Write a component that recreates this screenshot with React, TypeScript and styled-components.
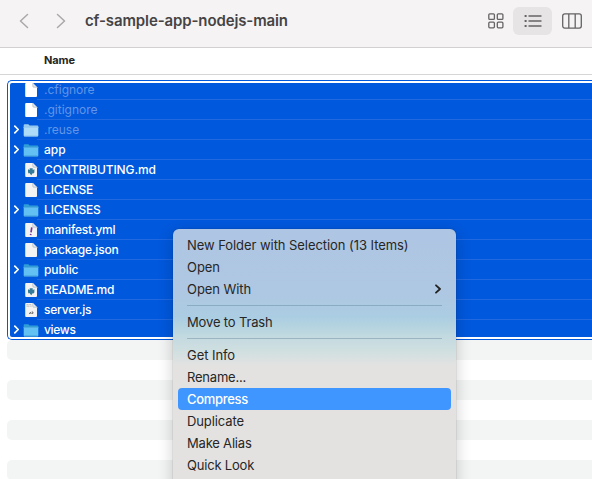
import React from 'react';
import styled, { createGlobalStyle, css } from 'styled-components';

const GlobalStyle = createGlobalStyle`
  * { box-sizing: border-box; }
  body { margin: 0; background: #fff; overflow: hidden; }
`;

const Window = styled.div`
  position: relative;
  width: 592px;
  height: 479px;
  overflow: hidden;
  display: flex;
  flex-direction: column;
  background: #fff;
  color: #262626;
  font-family: Inter, 'Liberation Sans', sans-serif;
  cursor: default;
`;

const Toolbar = styled.header`
  flex: none;
  display: flex;
  align-items: center;
  justify-content: space-between;
  height: 48px;
  padding: 0 0 6px 19px;
  background: #f5f3f4;
  border-bottom: 1px solid #d2d0d1;
`;

const Navigation = styled.div`
  display: flex;
  align-items: center;
`;

const NavArrow = styled.svg`
  width: 10px;
  height: 16px;
  margin-right: 27px;
  fill: none;
  stroke: #aaa8a9;
  stroke-width: 1.5;
  stroke-linecap: round;
  stroke-linejoin: round;
`;

const Title = styled.h1`
  margin: 0 0 0 -8px;
  font-size: 15px;
  line-height: 20px;
  font-weight: 600;
  letter-spacing: -0.12px;
  color: #454344;
`;

const Views = styled.div`
  display: flex;
  align-items: center;
`;

const ViewButton = styled.div<{ $width: number; $active?: boolean }>`
  display: flex;
  align-items: center;
  justify-content: center;
  width: ${(p) => p.$width}px;
  height: 28px;
  border-radius: 6px;
  background: ${(p) => (p.$active ? '#e6e4e5' : 'transparent')};
`;

const ViewIcon = styled.svg`
  display: block;
  fill: none;
  stroke: #656364;
  stroke-width: 1.3;
`;

const ColumnHeader = styled.div`
  flex: none;
  height: 27px;
  padding-left: 44px;
  border-bottom: 1px solid #d6d6d6;
  font-size: 11px;
  line-height: 25px;
  font-weight: 700;
  letter-spacing: -0.1px;
`;

const FileList = styled.main`
  padding: 5px 0 0 7px;
`;

const Selection = styled.div`
  height: 260px;
  padding: 2px 0 2px 2px;
  border: 1px solid #0058dc;
  border-right: 0;
  border-radius: 5px 0 0 5px;
`;

const SelectedRows = styled.div`
  height: 254px;
  overflow: hidden;
  border-radius: 2px 0 0 2px;
  background: #0058dc;
`;

const Rows = styled.div`
  margin-top: -3px;
`;

const Row = styled.div`
  display: flex;
  align-items: center;
  height: 20px;
  padding-left: 3px;
`;

const Disclosure = styled.svg`
  flex: none;
  width: 7px;
  height: 10px;
  margin-right: 3px;
  fill: none;
  stroke: #fff;
  stroke-width: 1.7;
  stroke-linecap: round;
  stroke-linejoin: round;
`;

const FileIcon = styled.svg`
  flex: none;
  width: 16px;
  height: 18px;
`;

const FileName = styled.div<{ $dim?: boolean; $spacing?: number }>`
  flex: 1;
  height: 20px;
  margin-left: -2px;
  padding-left: 7px;
  border-bottom: 1px solid #2269df;
  font-size: 12px;
  line-height: 19px;
  font-weight: ${(p) => (p.$dim ? 400 : 500)};
  letter-spacing: ${(p) => p.$spacing ?? 0}px;
  color: ${(p) => (p.$dim ? '#6295e8' : '#fff')};
`;

const Stripe = styled.div`
  height: 20px;
  margin-bottom: 20px;
  border-radius: 5px 0 0 5px;
  background: #f3f4f4;
`;

const Menu = styled.div`
  position: absolute;
  left: 173px;
  top: 229px;
  width: 283px;
  height: 270px;
  padding: 5px;
  border-radius: 6px;
  background: linear-gradient(
    #aec6e3 0, #aec7e2 64px, #abcde2 88px, #b3d3e0 96px,
    #c4dae0 109px, #d0dfe0 122px, #e3e2e1 137px
  );
  box-shadow: 0 0 1px rgba(0, 0, 0, 0.55), 0 5px 16px rgba(0, 0, 0, 0.2);
`;

const MenuItem = styled.div<{ $spacing?: number; $highlighted?: boolean }>`
  display: flex;
  align-items: center;
  justify-content: space-between;
  height: 22px;
  padding: 0 10px 0 9px;
  border-radius: 4px;
  font-size: 13px;
  line-height: 22px;
  letter-spacing: ${(p) => p.$spacing ?? -0.06}px;
  white-space: nowrap;
  ${(p) =>
    p.$highlighted &&
    css`
      background: #4096ff;
      color: #fff;
      font-weight: 500;
    `}
`;

const Separator = styled.div`
  height: 1px;
  margin: 5px 9px;
  background: rgba(60, 100, 125, 0.3);
`;

const SubmenuArrow = styled.svg`
  width: 6px;
  height: 10px;
  fill: none;
  stroke: #222;
  stroke-width: 1.8;
  stroke-linecap: round;
  stroke-linejoin: round;
`;

type IconKind = 'page' | 'folder' | 'markdown' | 'yaml' | 'script';

interface FileEntry {
  name: string;
  icon: IconKind;
  dim?: boolean;
  spacing?: number;
}

const files: FileEntry[] = [
  { name: '.cfignore', icon: 'page', dim: true },
  { name: '.gitignore', icon: 'page', dim: true },
  { name: '.reuse', icon: 'folder', dim: true },
  { name: 'app', icon: 'folder' },
  { name: 'CONTRIBUTING.md', icon: 'markdown', spacing: -0.12 },
  { name: 'LICENSE', icon: 'page', spacing: -0.15 },
  { name: 'LICENSES', icon: 'folder', spacing: -0.15 },
  { name: 'manifest.yml', icon: 'yaml', spacing: -0.2 },
  { name: 'package.json', icon: 'page', spacing: -0.2 },
  { name: 'public', icon: 'folder', spacing: -0.1 },
  { name: 'README.md', icon: 'markdown', spacing: -0.2 },
  { name: 'server.js', icon: 'script', spacing: -0.2 },
  { name: 'views', icon: 'folder', spacing: -0.3 },
];

function EntryIcon({ kind, dim }: { kind: IconKind; dim?: boolean }) {
  if (kind === 'folder') {
    return (
      <FileIcon viewBox="0 0 16 18">
        <path d="M.7 4.2q0-1 1-1h3.6l1.3 1.2h7.7q1 0 1 1V7H.7z" fill={dim ? '#9bcdf0' : '#309fd8'} />
        <path d="M.7 6h14.6v8.4q0 1-1 1H1.7q-1 0-1-1z" fill={dim ? '#aedcf8' : '#62c0f2'} />
        <path d="M.7 6.1h14.6M1.4 15h13.2" stroke={dim ? '#86bce8' : '#3794d2'} strokeWidth=".8" />
      </FileIcon>
    );
  }
  return (
    <FileIcon viewBox="0 0 16 18">
      <path d="M2.2 3q0-1 1-1h6.6L14 6.2V15q0 1-1 1H3.2q-1 0-1-1z" fill={dim ? '#fff' : '#f3f3f3'} />
      <path d="M9.8 2v3.2q0 1 1 1H14z" fill="#e4e8ec" />
      <path d="M9.8 2v3.2q0 1 1 1H14" fill="none" stroke="#a5adb6" strokeWidth=".6" />
      {kind === 'markdown' && (
        <path d="M5 8.2l1.7.7V7.3h3v1.6l1.7-.7v3l-.8 1.2-.7-.4-1.7 2.2L6.5 12l-.8.4-.7-1.2z" fill="#347b99" />
      )}
      {kind === 'yaml' && (
        <path d="M8.8 6.4L8 11.4M7.8 12.8l-.2 1.3" stroke="#77359c" strokeWidth="1.7" />
      )}
      {kind === 'script' && (
        <>
          <path d="M3.4 3.6h2.1M6.3 3.6h2M3.4 5.2h3.1M7.2 5.2h1.5" stroke="#b5b5b5" strokeWidth=".8" />
          <path d="M6 12.4h1.4V11M8.4 12.4h1.5V11H8.7" stroke="#666" strokeWidth="1" fill="none" />
        </>
      )}
    </FileIcon>
  );
}

interface MenuEntry {
  label: string;
  spacing?: number;
  submenu?: boolean;
  highlighted?: boolean;
}

const menuGroups: MenuEntry[][] = [
  [
    { label: 'New Folder with Selection (13 Items)' },
    { label: 'Open' },
    { label: 'Open With', submenu: true },
  ],
  [{ label: 'Move to Trash', spacing: -0.15 }],
  [
    { label: 'Get Info' },
    { label: 'Rename...', spacing: -0.2 },
    { label: 'Compress', highlighted: true, spacing: -0.3 },
    { label: 'Duplicate', spacing: -0.1 },
    { label: 'Make Alias', spacing: -0.2 },
    { label: 'Quick Look', spacing: -0.2 },
  ],
];

export default function App() {
  return (
    <>
      <GlobalStyle />
      <Window>
        <Toolbar>
          <Navigation>
            <NavArrow viewBox="0 0 10 16"><path d="M8.5 1.5L1.5 8l7 6.5" /></NavArrow>
            <NavArrow viewBox="0 0 10 16"><path d="M1.5 1.5l7 6.5-7 6.5" /></NavArrow>
            <Title>cf-sample-app-nodejs-main</Title>
          </Navigation>
          <Views>
            <ViewButton $width={35}>
              <ViewIcon width="16" height="16" viewBox="0 0 16 16">
                <rect x=".8" y=".8" width="5.6" height="5.6" rx="1" />
                <rect x="9.3" y=".8" width="5.6" height="5.6" rx="1" />
                <rect x=".8" y="9.2" width="5.6" height="5.6" rx="1" />
                <rect x="9.3" y="9.2" width="5.6" height="5.6" rx="1" />
              </ViewIcon>
            </ViewButton>
            <ViewButton $width={39} $active>
              <ViewIcon width="18" height="14" viewBox="0 0 18 14">
                <path d="M.6 2h2M.6 7h2M.6 12h2" strokeWidth="2" />
                <path d="M5 2h12M5 7h12M5 12h12" strokeWidth="1.4" strokeLinecap="round" />
              </ViewIcon>
            </ViewButton>
            <ViewButton $width={40}>
              <ViewIcon width="20" height="16" viewBox="0 0 20 16">
                <rect x=".7" y=".9" width="18.6" height="14.2" rx="2" />
                <path d="M6.8 1v14M13.2 1v14" />
              </ViewIcon>
            </ViewButton>
          </Views>
        </Toolbar>
        <ColumnHeader>Name</ColumnHeader>
        <FileList>
          <Selection>
            <SelectedRows>
              <Rows>
                {files.map((file) => (
                  <Row key={file.name}>
                    <Disclosure viewBox="0 0 7 10">
                      {file.icon === 'folder' && <path d="M1.8 1.2L5.2 4.5 1.8 7.8" />}
                    </Disclosure>
                    <EntryIcon kind={file.icon} dim={file.dim} />
                    <FileName $dim={file.dim} $spacing={file.spacing}>{file.name}</FileName>
                  </Row>
                ))}
              </Rows>
            </SelectedRows>
          </Selection>
          <Stripe />
          <Stripe />
          <Stripe />
          <Stripe />
        </FileList>
        <Menu>
          {menuGroups.map((group, index) => (
            <React.Fragment key={group[0].label}>
              {index > 0 && <Separator />}
              {group.map((item) => (
                <MenuItem key={item.label} $spacing={item.spacing} $highlighted={item.highlighted}>
                  <span>{item.label}</span>
                  {item.submenu && <SubmenuArrow viewBox="0 0 6 10"><path d="M1 1.3L5 5 1 8.7" /></SubmenuArrow>}
                </MenuItem>
              ))}
            </React.Fragment>
          ))}
        </Menu>
      </Window>
    </>
  );
}
